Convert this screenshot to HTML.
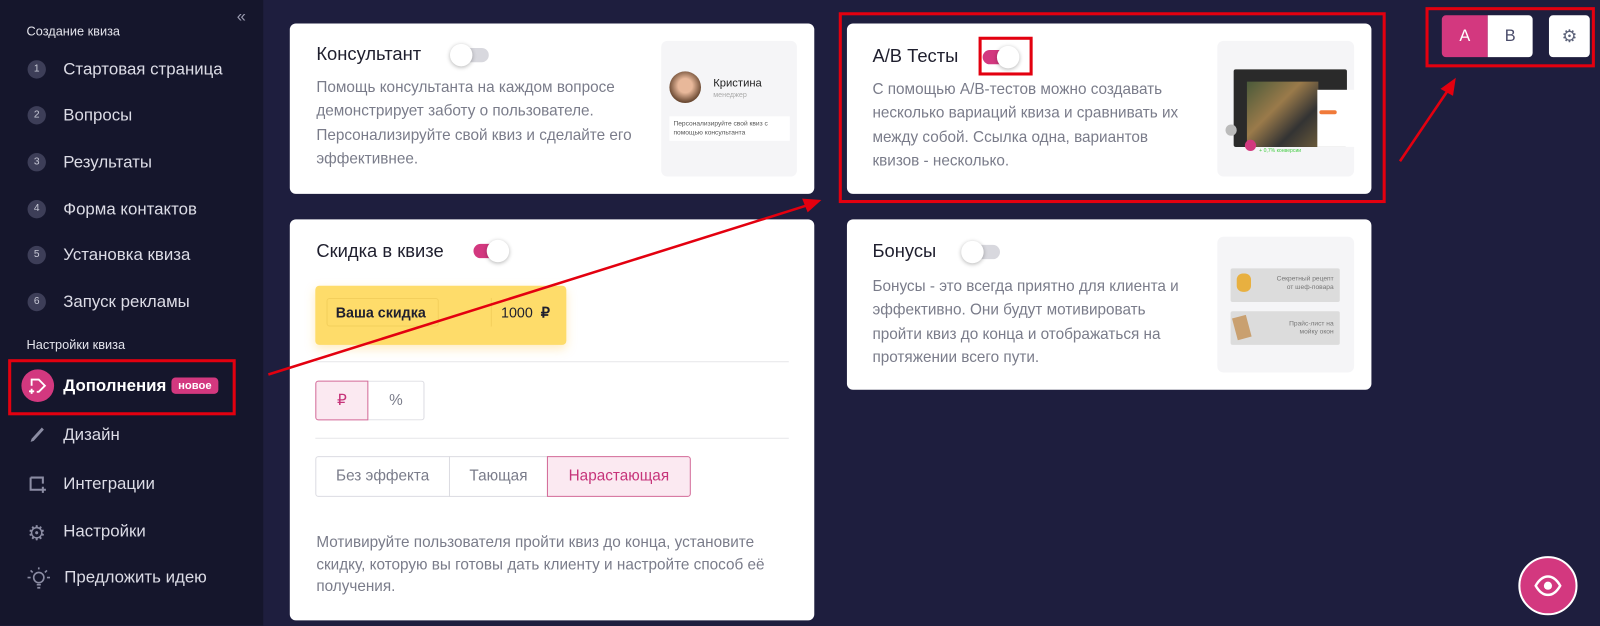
<!DOCTYPE html>
<html><head><meta charset="utf-8"><style>
*{margin:0;padding:0;box-sizing:border-box}
body{width:1600px;height:625px;overflow:hidden;background:#1e1e3e;font-family:"Liberation Sans",sans-serif}
#w{position:absolute;left:0;top:0;width:1568px;height:613px;transform:scale(1.0204);transform-origin:0 0;background:#1e1e3e}
.a{position:absolute}
#sb{left:0;top:0;width:258px;height:613px;background:#15162c}
.sec{font-size:12.5px;color:#e4e4ec;left:26px}
.it{left:62px;font-size:16.5px;color:#dcdce6;line-height:20px}
.num{left:27px;width:18px;height:18px;border-radius:50%;background:#3d3e58;color:#c8c9d6;font-size:10px;text-align:center;line-height:18px}
.card{background:#fff;border-radius:6px}
.t{font-size:18px;color:#1f1f2e}
.p{font-size:15px;color:#7a7c8a;line-height:23.4px}
.tg{width:32px;height:14px;border-radius:7px}
.kn{width:22px;height:22px;border-radius:50%;background:#fff;box-shadow:0 1px 4px rgba(0,0,0,.3)}
.prev{background:#f5f5f7;border-radius:6px}
.red{border:3px solid #e3000f}
.seg{border:1px solid #dcdce2;font-size:15px;color:#7a7c8a;text-align:center}
.pk{background:#fbe9f1;border-color:#d36a98;color:#c6347a}
</style></head><body><div id="w">
<div id="sb" class="a"></div>
<div class="a" style="left:232px;top:8px;color:#9a9bb0;font-size:16px">«</div>
<div class="a sec" style="top:24px">Создание квиза</div>
<div class="a num" style="top:59px">1</div><div class="a it" style="top:58px">Стартовая страница</div>
<div class="a num" style="top:104px">2</div><div class="a it" style="top:103px">Вопросы</div>
<div class="a num" style="top:150px">3</div><div class="a it" style="top:149px">Результаты</div>
<div class="a num" style="top:196px">4</div><div class="a it" style="top:195px">Форма контактов</div>
<div class="a num" style="top:241px">5</div><div class="a it" style="top:240px">Установка квиза</div>
<div class="a num" style="top:287px">6</div><div class="a it" style="top:286px">Запуск рекламы</div>
<div class="a sec" style="top:331px">Настройки квиза</div>
<div class="a" style="left:21px;top:362px;width:32px;height:32px;border-radius:50%;background:#d3387f"></div>
<svg class="a" style="left:27px;top:368px" width="20" height="20" viewBox="0 0 20 20" fill="none" stroke="#fff" stroke-width="1.8"><path d="M4 10V4h7l6 6-6 6H9"/><path d="M4 13v5M1.5 15.5h5"/></svg>
<div class="a it" style="top:368px;color:#fff;font-weight:bold">Дополнения</div>
<div class="a" style="left:168px;top:370px;width:46px;height:16px;border-radius:4px;background:#d3387f;color:#fff;font-size:11px;font-weight:bold;text-align:center;line-height:16px">новое</div>
<div class="a red" style="left:8px;top:352px;width:223px;height:55px"></div>
<svg class="a" style="left:28px;top:417px" width="18" height="18" viewBox="0 0 18 18"><path d="M2 16l3-1 10-11-2-2L3 13z" fill="#8b8ca3"/></svg>
<div class="a it" style="top:416px">Дизайн</div>
<svg class="a" style="left:27px;top:464px" width="20" height="20" viewBox="0 0 20 20" fill="none" stroke="#8b8ca3" stroke-width="2"><path d="M3 4h12v6M3 4v12h9M15 13v6M12 16h6"/></svg>
<div class="a it" style="top:464px">Интеграции</div>
<div class="a" style="left:27px;top:510px;color:#8b8ca3;font-size:20px">⚙</div>
<div class="a it" style="top:511px">Настройки</div>
<svg class="a" style="left:26px;top:555px" width="24" height="24" viewBox="0 0 24 24" fill="none" stroke="#8b8ca3" stroke-width="1.6"><circle cx="12" cy="11" r="5"/><path d="M10 18h4M10.5 21h3M1 11h3M20 11h3M4 4l2 2M20 4l-2 2M12 1v2"/></svg>
<div class="a it" style="top:556px;left:63px">Предложить идею</div>

<div class="a card" style="left:284px;top:23px;width:514px;height:167px"></div>
<div class="a t" style="left:310px;top:43px">Консультант</div>
<div class="a tg" style="left:447px;top:47px;background:#d8d8de"></div><div class="a kn" style="left:441px;top:43px"></div>
<div class="a p" style="left:310px;top:74px;width:330px">Помощь консультанта на каждом вопросе демонстрирует заботу о пользователе. Персонализируйте свой квиз и сделайте его эффективнее.</div>
<div class="a prev" style="left:648px;top:40px;width:133px;height:133px"></div>
<div class="a" style="left:656px;top:70px;width:31px;height:31px;border-radius:50%;background:radial-gradient(circle at 50% 45%,#e8b89a 30%,#6b4a33 70%)"></div>
<div class="a" style="left:699px;top:76px;font-size:11px;color:#222">Кристина</div>
<div class="a" style="left:699px;top:90px;font-size:7px;color:#aaa">менеджер</div>
<div class="a" style="left:656px;top:114px;width:118px;height:24px;background:#fff;font-size:6.5px;color:#555;padding:3px 4px;line-height:9px">Персонализируйте свой квиз с помощью консультанта</div>

<div class="a card" style="left:284px;top:215px;width:514px;height:393px"></div>
<div class="a t" style="left:310px;top:236px">Скидка в квизе</div>
<div class="a tg" style="left:464px;top:239px;background:#d3387f"></div><div class="a kn" style="left:477px;top:235px"></div>
<div class="a" style="left:309px;top:280px;width:246px;height:58px;background:#fedc6a;border-radius:4px;box-shadow:0 4px 10px rgba(254,200,80,.35)"></div>
<div class="a" style="left:320px;top:292px;width:110px;height:28px;border:1px solid #f3cf5c;border-radius:3px;font-size:14px;font-weight:bold;color:#1f1f2e;line-height:26px;padding-left:8px">Ваша скидка</div>
<div class="a" style="left:481px;top:292px;width:78px;height:28px;font-size:14px;color:#1f1f2e;line-height:28px;padding-left:9px;border-left:1px solid #f3cf5c">1000 &nbsp;<b>₽</b></div>
<div class="a" style="left:309px;top:354px;width:464px;height:1px;background:#e6e6ea"></div>
<div class="a seg pk" style="left:309px;top:373px;width:52px;height:39px;line-height:37px;border-radius:3px 0 0 3px">₽</div>
<div class="a seg" style="left:361px;top:373px;width:55px;height:39px;line-height:37px;border-left:none;border-radius:0 3px 3px 0">%</div>
<div class="a" style="left:309px;top:429px;width:464px;height:1px;background:#e6e6ea"></div>
<div class="a seg" style="left:309px;top:447px;width:132px;height:40px;line-height:38px;border-radius:3px 0 0 3px">Без эффекта</div>
<div class="a seg" style="left:440px;top:447px;width:97px;height:40px;line-height:38px">Тающая</div>
<div class="a seg pk" style="left:536px;top:447px;width:141px;height:40px;line-height:38px;border-radius:0 3px 3px 0">Нарастающая</div>
<div class="a p" style="left:310px;top:521px;width:460px;line-height:21.5px">Мотивируйте пользователя пройти квиз до конца, установите скидку, которую вы готовы дать клиенту и настройте способ её получения.</div>

<div class="a card" style="left:830px;top:23px;width:514px;height:167px"></div>
<div class="a t" style="left:855px;top:45px">А/В Тесты</div>
<div class="a tg" style="left:963px;top:49px;background:#d3387f"></div><div class="a kn" style="left:977px;top:45px"></div>
<div class="a red" style="left:959px;top:36px;width:53px;height:38px"></div>
<div class="a p" style="left:855px;top:76px;width:320px">С помощью A/B-тестов можно создавать несколько вариаций квиза и сравнивать их между собой. Ссылка одна, вариантов квизов - несколько.</div>
<div class="a prev" style="left:1193px;top:40px;width:134px;height:133px"></div>
<div class="a" style="left:1209px;top:68px;width:111px;height:76px;background:#2a2a2a;border-radius:2px"></div>
<div class="a" style="left:1222px;top:80px;width:70px;height:64px;background:linear-gradient(135deg,#4a5a3a,#9a7a4a 40%,#333 70%,#6a5a3a)"></div>
<div class="a" style="left:1291px;top:88px;width:38px;height:56px;background:#fff"></div>
<div class="a" style="left:1293px;top:108px;width:17px;height:4px;background:#f07a3a;border-radius:2px"></div>
<div class="a" style="left:1201px;top:122px;width:11px;height:11px;border-radius:50%;background:#bbb"></div>
<div class="a" style="left:1220px;top:137px;width:11px;height:11px;border-radius:50%;background:#d3387f"></div>
<div class="a" style="left:1234px;top:145px;font-size:5px;color:#4c4">+ 0,7% конверсии</div>
<div class="a red" style="left:822px;top:12px;width:536px;height:187px"></div>

<div class="a card" style="left:830px;top:215px;width:514px;height:167px"></div>
<div class="a t" style="left:855px;top:236px">Бонусы</div>
<div class="a tg" style="left:948px;top:240px;background:#d8d8de"></div><div class="a kn" style="left:942px;top:236px"></div>
<div class="a p" style="left:855px;top:269px;width:320px">Бонусы - это всегда приятно для клиента и эффективно. Они будут мотивировать пройти квиз до конца и отображаться на протяжении всего пути.</div>
<div class="a prev" style="left:1193px;top:232px;width:134px;height:133px"></div>
<div class="a" style="left:1206px;top:263px;width:107px;height:33px;background:#dcdcdc;border-radius:2px;font-size:6.5px;color:#777;text-align:right;padding:7px 6px;line-height:8px">Секретный рецепт<br>от шеф-повара</div>
<div class="a" style="left:1212px;top:268px;width:14px;height:18px;background:#e8b040;border-radius:6px"></div>
<div class="a" style="left:1206px;top:305px;width:107px;height:33px;background:#dcdcdc;border-radius:2px;font-size:6.5px;color:#777;text-align:right;padding:9px 6px;line-height:8px">Прайс-лист на<br>мойку окон</div>
<div class="a" style="left:1210px;top:310px;width:14px;height:22px;background:#c9a070;transform:rotate(-15deg)"></div>

<div class="a" style="left:1413px;top:15px;width:45px;height:41px;background:#d3387f;border-radius:4px 0 0 4px;color:#fff;font-size:16px;text-align:center;line-height:41px">A</div>
<div class="a" style="left:1458px;top:15px;width:44px;height:41px;background:#fff;border-radius:0 4px 4px 0;color:#4a4c6a;font-size:16px;text-align:center;line-height:41px">B</div>
<div class="a" style="left:1518px;top:15px;width:40px;height:41px;background:#fff;border-radius:4px;color:#5b6178;font-size:17px;text-align:center;line-height:41px">⚙</div>
<div class="a red" style="left:1397px;top:7px;width:166px;height:59px"></div>

<div class="a" style="left:1488px;top:545px;width:58px;height:58px;border-radius:50%;background:#d3387f;border:2px solid #fff"></div>
<svg class="a" style="left:1503px;top:563px" width="28" height="22" viewBox="0 0 28 22"><path d="M2 11C6 4 10 2 14 2s8 2 12 9c-4 7-8 9-12 9S6 18 2 11z" fill="none" stroke="#fff" stroke-width="2.4"/><circle cx="14" cy="11" r="4" fill="#fff"/></svg>

<svg class="a" style="left:0;top:0" width="1568" height="613"><g stroke="#e3000f" stroke-width="2.5" fill="#e3000f"><line x1="263" y1="367" x2="795" y2="200"/><path d="M802 197l-14 -1 4 10z"/><line x1="1372" y1="158" x2="1420" y2="87"/><path d="M1425 79l-11 8 9 5z"/></g></svg>
</div></body></html>
